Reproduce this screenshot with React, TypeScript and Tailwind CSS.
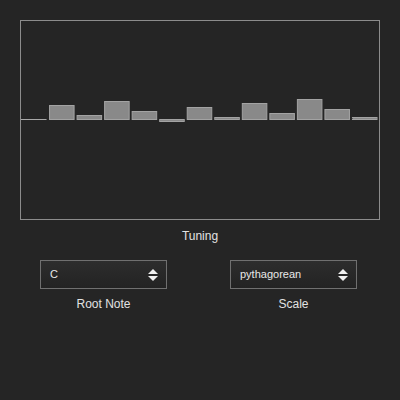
import React from "react";

const offsets = [0, 15, 5, 19, 9, -3, 13, 3, 17, 7, 21, 11, 3];
const step = 358 / 13;

function TuningChart() {
  return (
    <div className="h-[200px] w-[360px] border border-[#8c8c8c]">
      <svg width="358" height="198" viewBox="0 0 358 198">
        {offsets.map((h, i) => {
          const x = i * step + (i === 0 ? 0 : 0.5);
          const w = step - 2;
          if (h === 0) {
            return <rect key={i} x={x - 1} y={98} width={w + 1} height={1} fill="#a8a8a8" />;
          }
          const y = h > 0 ? 99 - h : 98;
          const hh = Math.abs(h);
          return (
            <rect
              key={i}
              x={x + 0.5}
              y={y + 0.5}
              width={w - 1}
              height={hh - 1}
              fill="#898989"
              stroke="#a3a3a3"
              strokeWidth={1}
            />
          );
        })}
      </svg>
    </div>
  );
}

function Select({ value }: { value: string }) {
  return (
    <div className="flex h-[29px] w-[127px] items-center justify-between border border-[#707070] bg-gradient-to-b from-[#2d2d2d] to-[#232323] pl-[9px] pr-[8px]">
      <span className="text-[11px] text-[#e8e8e8]">{value}</span>
      <svg width="10" height="12" viewBox="0 0 10 12">
        <path d="M5 0 L10 5 L0 5 Z" fill="#f0f0f0" />
        <path d="M0 7 L10 7 L5 12 Z" fill="#f0f0f0" />
      </svg>
    </div>
  );
}

export default function App() {
  return (
    <div
      className="h-[400px] w-[400px] bg-[#252525] p-5 text-[#e2e2e2]"
      style={{ fontFamily: '"Liberation Sans", Arial, sans-serif' }}
    >
      <TuningChart />
      <div className="mt-[9px] text-center text-[12px] leading-[15px]">Tuning</div>
      <div className="mt-[16px] flex gap-[63px] pl-5">
        <div className="flex flex-col items-center">
          <Select value="C" />
          <span className="mt-[8px] text-[12px] leading-[15px]">Root Note</span>
        </div>
        <div className="flex flex-col items-center">
          <Select value="pythagorean" />
          <span className="mt-[8px] text-[12px] leading-[15px]">Scale</span>
        </div>
      </div>
    </div>
  );
}
